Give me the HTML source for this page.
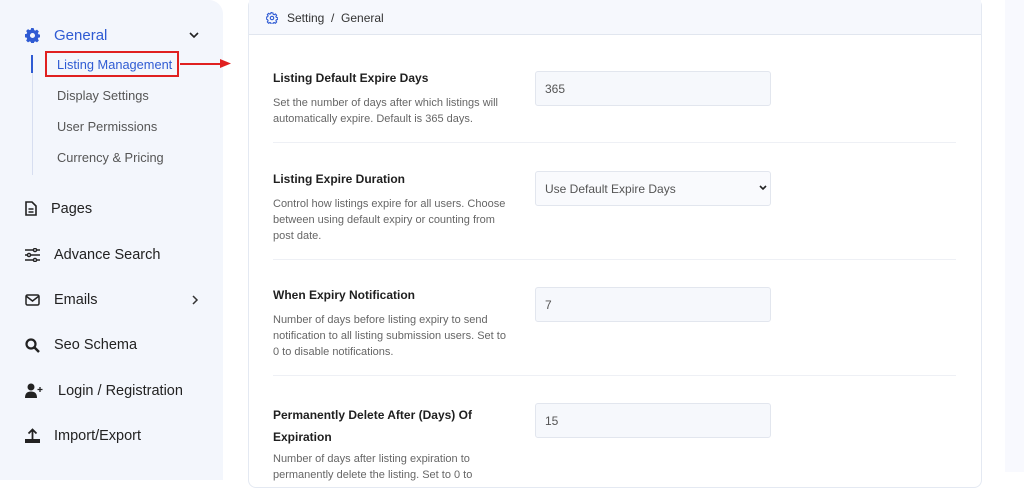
<!DOCTYPE html>
<html><head><style>
*{margin:0;padding:0;box-sizing:border-box}
body{width:1024px;height:472px;overflow:hidden;background:#fff;font-family:"Liberation Sans",sans-serif;position:relative}
.side{position:absolute;left:0;top:0;width:223px;height:480px;background:#f3f6fc;border-radius:0 14px 0 0}
.t{position:absolute;white-space:nowrap}
.nav{font-size:14.5px;color:#222;left:54px}
.sub{font-size:12.8px;color:#555;left:57px}
.ic{position:absolute}
.card{position:absolute;left:248px;top:-2px;width:734px;height:490px;border:1px solid #e4e9f2;border-radius:8px;background:#fff}
.hdr{position:absolute;left:249px;top:0;width:732px;height:35px;background:#f6f8fd;border-bottom:1px solid #e1e6ef}
.right{position:absolute;left:1005px;top:0;width:19px;height:472px;background:#f8f9fe}
.lab{left:273px;font-size:12px;font-weight:bold;color:#1f1f1f}
.desc{left:273px;font-size:11px;color:#666;line-height:16px;white-space:normal;width:240px}
.inp{position:absolute;left:535px;width:236px;height:35px;background:#f6f8fc;border:1px solid #e2e6ee;border-radius:3px;font-size:12px;color:#555;padding:10px 9px}
.sep{position:absolute;left:273px;width:683px;height:1px;background:#eef0f5}
</style></head><body>
<div class="side"></div>
<div class="right"></div>
<svg class="ic" style="left:25px;top:28px" width="15" height="15" viewBox="0 0 16 16"><path fill="#2f5bd3" d="M8 0l1.4.2.4 2 1.3.6 1.7-1.1 2 2-1.1 1.7.6 1.3 2 .4v2.8l-2 .4-.6 1.3 1.1 1.7-2 2-1.7-1.1-1.3.6-.4 2H6.6l-.4-2-1.3-.6-1.7 1.1-2-2 1.1-1.700-.6-1.3-2-.4V6.6l2-.4.6-1.3-1.1-1.7 2-2 1.7 1.1 1.3-.6.4-2zM8 5.3A2.7 2.7 0 108 10.7 2.7 2.7 0 008 5.3z"/></svg>
<div class="t nav" style="top:27px;color:#2f5bd3;font-size:15px">General</div>
<svg class="ic" style="left:189px;top:32px" width="10" height="7" viewBox="0 0 10 7"><path d="M1 1l4 4 4-4" stroke="#222" stroke-width="1.6" fill="none"/></svg>
<div style="position:absolute;left:32px;top:55px;width:1px;height:120px;background:#d7def0"></div>
<div style="position:absolute;left:31px;top:55px;width:2px;height:18px;background:#2f5bd3"></div>
<div style="position:absolute;left:45px;top:51px;width:134px;height:26px;border:2px solid #e02020"></div>
<div class="t sub" style="top:57px;color:#2f5bd3">Listing Management</div>
<div style="position:absolute;left:180px;top:63px;width:42px;height:1.5px;background:#e02020"></div>
<svg class="ic" style="left:220px;top:59px" width="11" height="9"><path d="M0 0l11 4.5L0 9z" fill="#e02020"/></svg>
<div class="t sub" style="top:88px">Display Settings</div>
<div class="t sub" style="top:119px">User Permissions</div>
<div class="t sub" style="top:150px">Currency &amp; Pricing</div>
<svg class="ic" style="left:25px;top:201px" width="12" height="15" viewBox="0 0 12 15"><path d="M1 1h6l4 4v9H1z" fill="none" stroke="#222" stroke-width="1.6"/><path d="M3.5 8h5M3.5 11h5" stroke="#222" stroke-width="1.4"/></svg>
<div class="t nav" style="top:201px;left:51px">Pages</div>
<svg class="ic" style="left:25px;top:248px" width="15" height="14" viewBox="0 0 15 14"><g stroke="#222" stroke-width="1.4" fill="none"><path d="M0 2h15M0 7h15M0 12h15"/><circle cx="10" cy="2" r="1.6" fill="#f3f6fc"/><circle cx="4" cy="7" r="1.6" fill="#f3f6fc"/><circle cx="10" cy="12" r="1.6" fill="#f3f6fc"/></g></svg>
<div class="t nav" style="top:247px">Advance Search</div>
<svg class="ic" style="left:25px;top:294px" width="15" height="12" viewBox="0 0 15 12"><rect x="1" y="1" width="13" height="10" rx="1.5" fill="none" stroke="#222" stroke-width="1.5"/><path d="M1 2l6.5 5L14 2" fill="none" stroke="#222" stroke-width="1.5"/></svg>
<div class="t nav" style="top:292px">Emails</div>
<svg class="ic" style="left:192px;top:295px" width="7" height="10" viewBox="0 0 7 10"><path d="M1 1l4 4-4 4" stroke="#333" stroke-width="1.5" fill="none"/></svg>
<svg class="ic" style="left:25px;top:338px" width="15" height="15" viewBox="0 0 15 15"><circle cx="6" cy="6" r="4.5" fill="none" stroke="#222" stroke-width="2.2"/><path d="M9.5 9.5L14 14" stroke="#222" stroke-width="2.5"/></svg>
<div class="t nav" style="top:337px">Seo Schema</div>
<svg class="ic" style="left:25px;top:383px" width="19" height="15" viewBox="0 0 19 15"><circle cx="6" cy="4" r="3.5" fill="#222"/><path d="M0 15c0-5 2.5-6.5 6-6.5s6 1.5 6 6.5z" fill="#222"/><path d="M15 4v5M12.5 6.5h5" stroke="#222" stroke-width="1.3"/></svg>
<div class="t nav" style="top:383px;left:58px">Login / Registration</div>
<svg class="ic" style="left:25px;top:428px" width="15" height="15" viewBox="0 0 15 15"><path d="M7.5 11V2M3.5 5.5l4-4 4 4" stroke="#222" stroke-width="1.8" fill="none"/><path d="M0 11h15v4H0z" fill="#222"/></svg>
<div class="t nav" style="top:428px">Import/Export</div>

<div class="card"></div>
<div class="hdr"></div>
<svg class="ic" style="left:266px;top:12px" width="12" height="12" viewBox="0 0 16 16"><path fill="none" stroke="#2f5bd3" stroke-width="1.5" d="M8 1l1.2.2.4 1.8 1.3.6 1.6-1 1.7 1.7-1 1.6.6 1.3 1.8.4v2.4l-1.8.4-.6 1.3 1 1.6-1.7 1.7-1.6-1-1.3.6-.4 1.8H6.8l-.4-1.8-1.3-.6-1.6 1-1.7-1.7 1-1.6-.6-1.3L.4 9.2V6.8l1.8-.4.6-1.3-1-1.6 1.7-1.7 1.6 1 1.3-.6.4-1.8z"/><circle cx="8" cy="8" r="2.3" fill="none" stroke="#2f5bd3" stroke-width="1.5"/></svg>
<div class="t" style="left:287px;top:11px;font-size:12px;color:#333">Setting &nbsp;/ &nbsp;General</div>

<div class="t lab" style="top:71px">Listing Default Expire Days</div>
<div class="t desc" style="top:95px">Set the number of days after which listings will automatically expire. Default is 365 days.</div>
<div class="inp" style="top:71px">365</div>
<div class="sep" style="top:142px"></div>

<div class="t lab" style="top:172px">Listing Expire Duration</div>
<div class="t desc" style="top:196px">Control how listings expire for all users. Choose between using default expiry or counting from post date.</div>
<div class="inp" style="top:171px;background:#f9fafd">Use Default Expire Days</div>
<svg class="ic" style="left:759px;top:185px" width="8" height="6" viewBox="0 0 8 6"><path d="M1 1l3 3 3-3" stroke="#222" stroke-width="1.6" fill="none"/></svg>
<div class="sep" style="top:259px"></div>

<div class="t lab" style="top:288px">When Expiry Notification</div>
<div class="t desc" style="top:312px">Number of days before listing expiry to send notification to all listing submission users. Set to 0 to disable notifications.</div>
<div class="inp" style="top:287px">7</div>
<div class="sep" style="top:375px"></div>

<div class="t lab" style="top:404px;line-height:22px;white-space:normal;width:240px">Permanently Delete After (Days) Of Expiration</div>
<div class="t desc" style="top:451px">Number of days after listing expiration to permanently delete the listing. Set to 0 to</div>
<div class="inp" style="top:403px">15</div>
</body></html>
